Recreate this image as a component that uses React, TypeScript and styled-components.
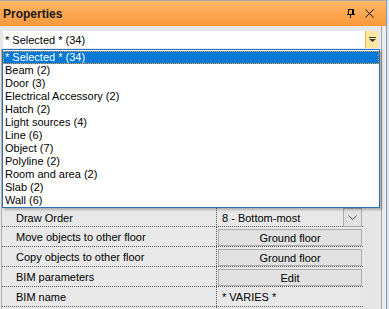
import React from 'react';
import styled, { createGlobalStyle } from 'styled-components';

const GlobalStyle = createGlobalStyle`
  html, body {
    margin: 0;
    padding: 0;
    background: #f0f0f0;
  }
  body {
    font-family: "Liberation Sans", Tahoma, Arial, sans-serif;
    font-size: 11px;
    color: #000;
  }
`;

const Frame = styled.div`
  width: 389px;
  height: 309px;
  display: flex;
  overflow: hidden;
  background: #e4e4e4;
`;

const Panel = styled.div`
  width: 386px;
  display: flex;
  flex-direction: column;
  border-right: 1px solid #6f9fd0;
  position: relative;
`;

const TitleBar = styled.div`
  flex-shrink: 0;
  height: 25px;
  border-top: 1px solid #a8a8a8;
  background: linear-gradient(to bottom, #ffbb68 0%, #fda852 45%, #f8983c 100%);
  display: flex;
  align-items: center;
  padding: 0 12px 0 3px;
  gap: 10px;
`;

const Title = styled.div`
  flex: 1;
  font-size: 12px;
  font-weight: bold;
  color: #1a1a1a;
  margin-top: 1px;
`;

const Body = styled.div`
  flex: 1;
  min-height: 0;
  display: flex;
`;

const Content = styled.div`
  width: 381px;
  border-right: 1px solid #a4a4a4;
  display: flex;
  flex-direction: column;
  background: #e6e6e6;
`;

const Filler = styled.div`
  flex: 1;
  background: #ececec;
`;

const ComboRow = styled.div`
  flex-shrink: 0;
  height: 23px;
  box-sizing: border-box;
  padding: 5px 3px 0 3px;
  background: #e6e7eb;
`;

const Combo = styled.div`
  height: 17px;
  background: #fff;
  display: flex;
  align-items: center;
`;

const ComboText = styled.div`
  flex: 1;
  padding-left: 2px;
`;

const ComboButton = styled.div`
  width: 13px;
  height: 17px;
  box-sizing: border-box;
  background: #fde6a0;
  border-left: 1px solid #f0b548;
  display: flex;
  align-items: center;
  justify-content: center;
`;

const Popup = styled.div`
  position: absolute;
  top: 49px;
  left: 2px;
  width: 378px;
  height: 159px;
  box-sizing: border-box;
  border: 1px solid #2a6fb8;
  padding-top: 1px;
  background: #fff;
  box-shadow: 2px 2px 2px rgba(0, 0, 0, 0.25);
  z-index: 2;
`;

const Item = styled.div<{ $selected?: boolean }>`
  height: 13px;
  line-height: 11px;
  box-sizing: border-box;
  padding-left: 1px;
  white-space: nowrap;
  background: ${({ $selected }) => ($selected ? '#0078d7' : 'transparent')};
  color: ${({ $selected }) => ($selected ? '#fff' : '#000')};
  border: 1px dotted ${({ $selected }) => ($selected ? '#f39a3a' : 'transparent')};
`;

const Grid = styled.div`
  width: 361px;
  display: flex;
  flex-direction: column;
  border-left: 1px solid #b0b0b0;
  margin-left: 1px;
`;

const Hidden = styled.div`
  flex-shrink: 0;
  height: 158px;
`;

const Row = styled.div`
  flex-shrink: 0;
  height: 20px;
  box-sizing: border-box;
  display: grid;
  grid-template-columns: 215px 1fr;
  border-bottom: 1px dotted #5a5a5a;
  background: #e8e8e8;
`;

const Name = styled.div`
  padding: 1px 0 0 14px;
  display: flex;
  align-items: center;
  border-right: 1px dotted #5a5a5a;
`;

const Value = styled.div`
  display: flex;
  align-items: center;
  padding: 0 1px 0 1px;
  gap: 2px;
`;

const ValueText = styled.div`
  flex: 1;
  padding: 1px 0 0 4px;
`;

const CellButton = styled.div`
  flex: 1;
  height: 17px;
  box-sizing: border-box;
  margin-top: 1px;
  padding-top: 1px;
  background: #e1e1e1;
  border: 1px solid #adadad;
  display: flex;
  align-items: center;
  justify-content: center;
`;

const DropButton = styled.div`
  width: 19px;
  height: 19px;
  box-sizing: border-box;
  margin-top: 1px;
  background: #e2e2e2;
  border: 1px solid #adadad;
  display: flex;
  align-items: center;
  justify-content: center;
`;

const items = [
  '* Selected * (34)',
  'Beam (2)',
  'Door (3)',
  'Electrical Accessory (2)',
  'Hatch (2)',
  'Light sources (4)',
  'Line (6)',
  'Object (7)',
  'Polyline (2)',
  'Room and area (2)',
  'Slab (2)',
  'Wall (6)',
];

const PinIcon = () => (
  <svg width="8" height="9" viewBox="0 0 8 9">
    <rect x="1.5" y="0.5" width="4" height="5" fill="none" stroke="#000" />
    <rect x="5" y="0" width="2" height="6" fill="#000" />
    <rect x="0" y="5" width="8" height="1" fill="#000" />
    <rect x="3" y="6" width="1" height="3" fill="#000" />
  </svg>
);

const CloseIcon = () => (
  <svg width="9" height="9" viewBox="0 0 9 9">
    <path d="M0.5 0.5 L8.5 8.5 M8.5 0.5 L0.5 8.5" stroke="#000" strokeWidth="1" />
  </svg>
);

const MoreIcon = () => (
  <svg width="7" height="5" viewBox="0 0 7 5">
    <rect x="0" y="0" width="7" height="1" fill="#3a3a3a" />
    <path d="M0 2 L7 2 L3.5 5 Z" fill="#3a3a3a" />
  </svg>
);

const ChevronIcon = () => (
  <svg width="9" height="5" viewBox="0 0 9 5">
    <path d="M0.5 0.5 L4.5 4.5 L8.5 0.5" fill="none" stroke="#555" strokeWidth="1" />
  </svg>
);

const App: React.FC = () => (
  <>
    <GlobalStyle />
    <Frame>
      <Panel>
        <TitleBar>
          <Title>Properties</Title>
          <PinIcon />
          <CloseIcon />
        </TitleBar>
        <Body>
          <Content>
            <ComboRow>
              <Combo>
                <ComboText>* Selected * (34)</ComboText>
                <ComboButton>
                  <MoreIcon />
                </ComboButton>
              </Combo>
            </ComboRow>
            <Grid>
              <Hidden />
              <Row>
                <Name>Draw Order</Name>
                <Value>
                  <ValueText>8 - Bottom-most</ValueText>
                  <DropButton>
                    <ChevronIcon />
                  </DropButton>
                </Value>
              </Row>
              <Row>
                <Name>Move objects to other floor</Name>
                <Value>
                  <CellButton>Ground floor</CellButton>
                </Value>
              </Row>
              <Row>
                <Name>Copy objects to other floor</Name>
                <Value>
                  <CellButton>Ground floor</CellButton>
                </Value>
              </Row>
              <Row>
                <Name>BIM parameters</Name>
                <Value>
                  <CellButton>Edit</CellButton>
                </Value>
              </Row>
              <Row>
                <Name>BIM name</Name>
                <Value>
                  <ValueText>* VARIES *</ValueText>
                </Value>
              </Row>
              <Row>
                <Name />
                <Value />
              </Row>
            </Grid>
          </Content>
          <Filler />
        </Body>
        <Popup>
          {items.map((item, i) => (
            <Item key={item} $selected={i === 0}>
              {item}
            </Item>
          ))}
        </Popup>
      </Panel>
    </Frame>
  </>
);

export default App;
